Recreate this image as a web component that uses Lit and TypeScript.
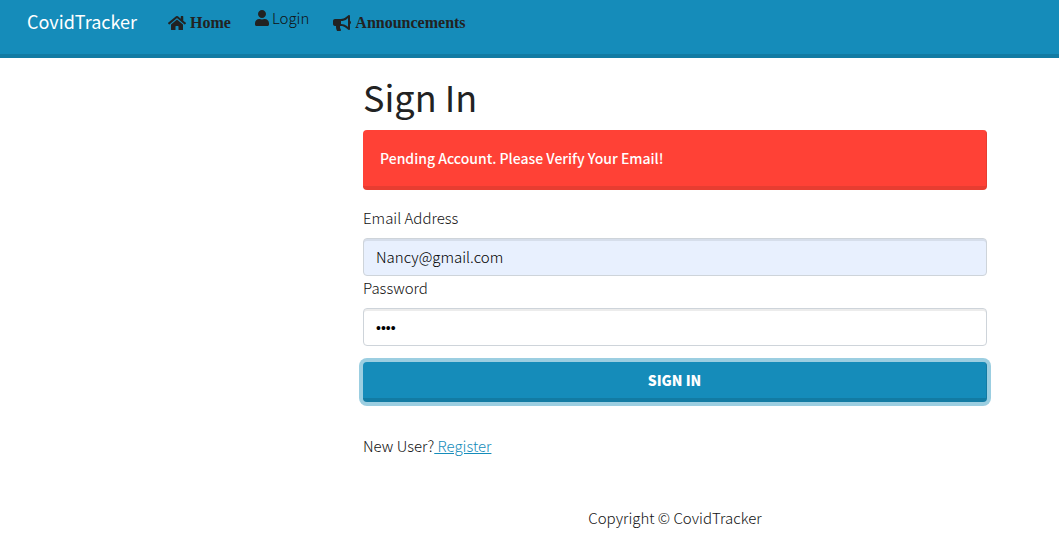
import { LitElement, html, css } from "lit";
import { customElement, state } from "lit/decorators.js";

@customElement("site-nav")
class SiteNav extends LitElement {
  static styles = css`
    :host {
      display: block;
    }
    .bar {
      display: flex;
      align-items: flex-start;
      gap: 24px;
      height: 54px;
      padding: 0 28px 0 27px;
      background: #158cba;
      border-bottom: 4px solid #127ba3;
    }
    .brand {
      margin-right: 7px;
      padding-top: 6px;
      font-size: 18px;
      font-weight: 400;
      line-height: 30px;
      color: #fff;
      text-decoration: none;
    }
    .link {
      display: flex;
      align-items: center;
      gap: 4px;
      padding-top: 11px;
      line-height: 24px;
      color: #222;
      text-decoration: none;
      white-space: nowrap;
    }
    .heavy {
      font-family: "Liberation Serif", serif;
      font-size: 16px;
      font-weight: 700;
    }
    .raised {
      gap: 3px;
      padding-top: 6px;
      color: #111;
    }
    svg {
      display: block;
      height: 16px;
      fill: #222;
    }
  `;

  render() {
    return html`
      <nav class="bar">
        <a class="brand" href="#">CovidTracker</a>
        <a class="link heavy" href="#home">
          <svg viewBox="0 0 576 512" width="18" aria-hidden="true">
            <path d="M280.37 148.26L96 300.11V464a16 16 0 0 0 16 16l112.06-.29a16 16 0 0 0 15.92-16V368a16 16 0 0 1 16-16h64a16 16 0 0 1 16 16v95.64a16 16 0 0 0 16 16.05L464 480a16 16 0 0 0 16-16V300L295.67 148.26a12.19 12.19 0 0 0-15.3 0zM571.6 251.47L488 182.56V44.05a12 12 0 0 0-12-12h-56a12 12 0 0 0-12 12v72.61L318.47 43a48 48 0 0 0-61 0L4.34 251.47a12 12 0 0 0-1.6 16.9l25.5 31A12 12 0 0 0 45.15 301l235.22-193.74a12.19 12.19 0 0 1 15.3 0L530.9 301a12 12 0 0 0 16.9-1.6l25.5-31a12 12 0 0 0-1.7-16.93z"></path>
          </svg>
          <span>Home</span>
        </a>
        <a class="link raised" href="#login">
          <svg viewBox="0 0 448 512" width="14" aria-hidden="true">
            <path d="M224 256c70.7 0 128-57.3 128-128S294.7 0 224 0 96 57.3 96 128s57.3 128 128 128zm89.6 32h-16.7c-22.2 10.2-46.9 16-72.9 16s-50.6-5.8-72.9-16h-16.7C60.2 288 0 348.2 0 422.4V464c0 26.5 21.5 48 48 48h352c26.5 0 48-21.5 48-48v-41.6c0-74.2-60.2-134.4-134.4-134.4z"></path>
          </svg>
          <span>Login</span>
        </a>
        <a class="link heavy" href="#announcements">
          <svg viewBox="0 0 576 512" width="18" aria-hidden="true">
            <path d="M576 240c0-23.63-12.95-44.04-32-55.12V32.01C544 23.26 537.02 0 512 0c-7.12 0-14.19 2.38-19.98 7.02l-85.03 68.03C364.28 109.19 310.66 128 256 128H64c-35.35 0-64 28.65-64 64v96c0 35.35 28.65 64 64 64h33.7c-1.39 10.48-2.18 21.14-2.18 32 0 39.77 9.26 77.35 25.56 110.94 5.19 10.69 16.52 17.06 28.4 17.06h74.28c26.05 0 41.69-29.84 25.9-50.56-16.4-21.52-26.15-48.36-26.15-77.44 0-11.11 1.62-21.79 4.41-32H256c54.66 0 108.28 18.81 150.98 52.95l85.03 68.03a32.023 32.023 0 0 0 19.98 7.02c24.92 0 32-22.78 32-32V295.13C563.05 284.04 576 263.63 576 240zm-96 141.42l-33.05-26.44C392.95 311.78 325.12 288 256 288v-96c69.12 0 136.95-23.78 190.95-66.98L480 98.58v282.84z"></path>
          </svg>
          <span>Announcements</span>
        </a>
      </nav>
    `;
  }
}

@customElement("sign-in-form")
class SignInForm extends LitElement {
  @state() private email = "Nancy@gmail.com";
  @state() private password = "1234";

  static styles = css`
    :host {
      display: block;
    }
    h1 {
      margin: 0 0 12px;
      color: #222;
      font-size: 36px;
      font-weight: 400;
      line-height: 44px;
    }
    .alert {
      padding: 15px 17px;
      border: solid #e73d31;
      border-width: 0 1px 4px 0;
      border-radius: 4px;
      background: #ff4136;
      color: #fff;
      font-size: 14px;
      font-weight: 500;
      line-height: 26px;
    }
    form {
      display: flex;
      flex-direction: column;
      margin-top: 16px;
    }
    label {
      margin-bottom: 8px;
      line-height: 24px;
    }
    input {
      box-sizing: border-box;
      width: 100%;
      height: 38px;
      margin: 0;
      padding: 5px 12px 7px;
      border: 1px solid #ced4da;
      border-radius: 4px;
      outline: none;
      background: #fff;
      box-shadow: inset 0 2px 0 rgba(0, 0, 0, 0.075);
      color: #000;
      font: inherit;
    }
    .filled {
      background: #e8f0fe;
    }
    .secret {
      padding: 7px 12px 5px;
      font-family: "Liberation Sans", sans-serif;
      font-size: 14px;
    }
    button {
      height: 40px;
      margin: 16px 0 0;
      padding: 0 12px;
      border: solid #127ba3;
      border-width: 0 1px 4px 0;
      border-radius: 4px;
      background: #158cba;
      box-shadow: 0 0 0 4px #9bcee1;
      color: #fff;
      font: inherit;
      font-size: 14px;
      font-weight: 900;
      text-transform: uppercase;
    }
    .register {
      margin: 32px 0 0;
      line-height: 24px;
    }
    a {
      color: #158cba;
    }
  `;

  render() {
    return html`
      <h1>Sign In</h1>
      <div class="alert" role="alert">Pending Account. Please Verify Your Email!</div>
      <form @submit=${(e: Event) => e.preventDefault()}>
        <label for="email">Email Address</label>
        <input
          id="email"
          class="filled"
          type="email"
          .value=${this.email}
          @input=${(e: Event) => (this.email = (e.target as HTMLInputElement).value)}
        />
        <label for="password">Password</label>
        <input
          id="password"
          class="secret"
          type="password"
          .value=${this.password}
          @input=${(e: Event) => (this.password = (e.target as HTMLInputElement).value)}
        />
        <button type="submit">Sign In</button>
      </form>
      <p class="register">New User?<a href="#register"> Register</a></p>
    `;
  }
}

@customElement("app-root")
class AppRoot extends LitElement {
  static styles = css`
    :host {
      display: block;
      font-family: "Noto Sans CJK SC", sans-serif;
      font-size: 15px;
      font-weight: 300;
      color: #111;
    }
    .page {
      display: grid;
      grid-template-columns: 363fr 624fr 72fr;
      padding-top: 16px;
    }
    .content {
      grid-column: 2;
    }
    footer {
      margin-top: 48px;
      line-height: 24px;
      text-align: center;
    }
  `;

  render() {
    return html`
      <site-nav></site-nav>
      <main class="page">
        <div class="content">
          <sign-in-form></sign-in-form>
          <footer>Copyright © CovidTracker</footer>
        </div>
      </main>
    `;
  }
}
